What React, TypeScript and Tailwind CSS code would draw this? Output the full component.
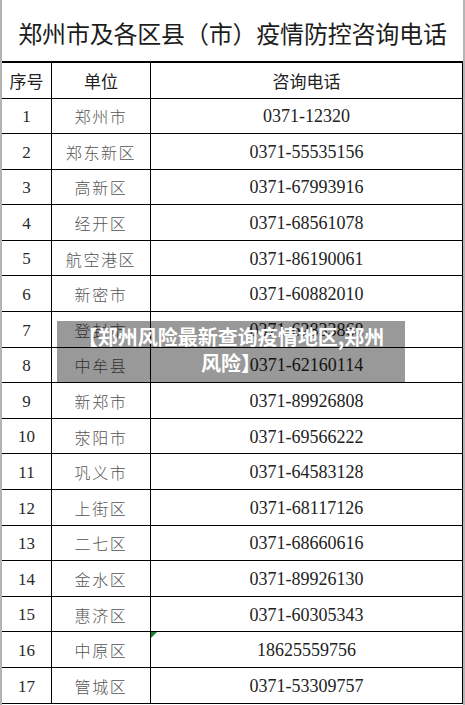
import React from "react";

const rows: [string, string, string][] = [
  ["1", "郑州市", "0371-12320"],
  ["2", "郑东新区", "0371-55535156"],
  ["3", "高新区", "0371-67993916"],
  ["4", "经开区", "0371-68561078"],
  ["5", "航空港区", "0371-86190061"],
  ["6", "新密市", "0371-60882010"],
  ["7", "登封市", "0371-62833868"],
  ["8", "中牟县", "0371-62160114"],
  ["9", "新郑市", "0371-89926808"],
  ["10", "荥阳市", "0371-69566222"],
  ["11", "巩义市", "0371-64583128"],
  ["12", "上街区", "0371-68117126"],
  ["13", "二七区", "0371-68660616"],
  ["14", "金水区", "0371-89926130"],
  ["15", "惠济区", "0371-60305343"],
  ["16", "中原区", "18625559756"],
  ["17", "管城区", "0371-53309757"],
];

const cjk = "font-['Noto_Sans_CJK_SC',sans-serif]";
const serif = "font-['Liberation_Serif','Noto_Sans_CJK_SC',serif]";

export default function App() {
  return (
    <div className="relative w-[465px] h-[705px] bg-white overflow-hidden">
      <div className="flex flex-col h-full border-l-2 border-r-2 border-[#b4b4b4]">
        {/* title */}
        <div
          className={`h-[61px] flex items-center justify-center pt-[4px] text-[24px] text-[#1c1c1c] tracking-[-0.2px] ${cjk}`}
        >
          郑州市及各区县（市）疫情防控咨询电话
        </div>

        {/* table */}
        <div className="border-t-2 border-black border-r border-r-black">
          <div
            className={`grid grid-cols-[50px_99px_1fr] h-[35.5px] border-b border-black text-[17px] text-[#222] ${cjk}`}
          >
            <div className="flex items-center justify-center border-r border-black">序号</div>
            <div className="flex items-center justify-center border-r border-black">单位</div>
            <div className="flex items-center justify-center">咨询电话</div>
          </div>
          {rows.map(([n, name, tel]) => (
            <div
              key={n}
              className="grid grid-cols-[50px_99px_1fr] h-[35.6px] border-b border-black"
            >
              <div
                className={`flex items-center justify-center pt-[2px] border-r border-black text-[17px] text-[#2a2a2a] ${serif}`}
              >
                {n}
              </div>
              <div
                className={`flex items-center justify-center pt-[1px] border-r border-black text-[16px] font-light tracking-[1.6px] text-[#555] ${cjk}`}
              >
                {name}
              </div>
              <div
                className={`relative flex items-center justify-center pt-[2px] text-[18px] text-[#222] ${serif}`}
              >
                {n === "16" && (
                  <span className="absolute left-0 top-0 w-0 h-0 border-t-[6px] border-r-[6px] border-t-[#1e7a2e] border-r-transparent" />
                )}
                {tel}
              </div>
            </div>
          ))}
        </div>
      </div>

      {/* caption overlay */}
      <div
        className={`absolute left-[57px] top-[321px] w-[348px] h-[62px] bg-black/40 pt-[3px] text-center text-white text-[20px] font-bold leading-[26px] ${cjk}`}
      >
        【郑州风险最新查询疫情地区,郑州
        <br />
        风险】
      </div>
    </div>
  );
}
